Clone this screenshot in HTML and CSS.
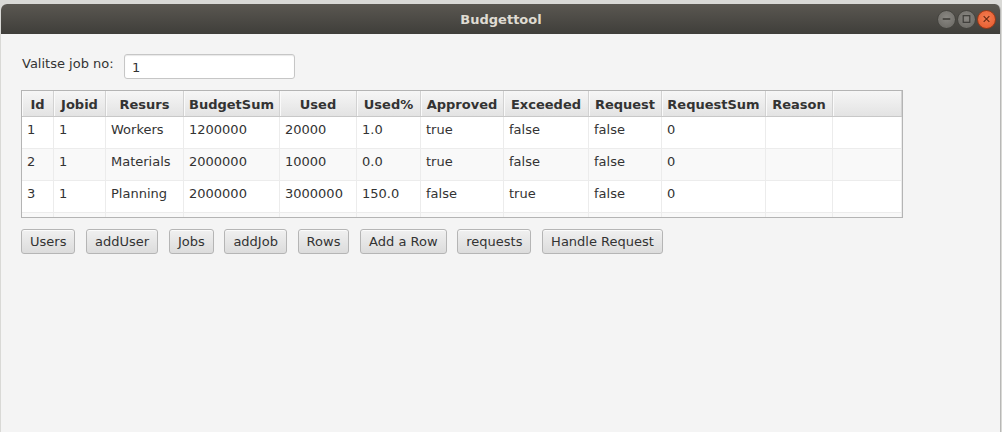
FILE: index.html
```html
<!DOCTYPE html>
<html>
<head>
<meta charset="utf-8">
<link rel="stylesheet" href="styles.css">
</head>
<body>
<div class="desktop">
  <div class="window">
    <div class="titlebar">
      <div></div>
      <div class="title">Budgettool</div>
      <div class="controls">
        <span class="wbtn wmin"><svg width="18" height="18" viewBox="0 0 18 18"><line x1="5" y1="9" x2="13" y2="9" stroke="#3a3935" stroke-width="1.4"/></svg></span>
        <span class="wbtn wmax"><svg width="18" height="18" viewBox="0 0 18 18"><rect x="5.5" y="5.5" width="7" height="7" fill="none" stroke="#3a3935" stroke-width="1.2"/></svg></span>
        <span class="wbtn wclose"><svg width="18" height="18" viewBox="0 0 18 18"><path d="M6 6 L12 12 M12 6 L6 12" stroke="#6b2a12" stroke-width="1.3"/></svg></span>
      </div>
    </div>
    <div class="content">
      <div class="jobrow">
        <span class="label">Valitse job no:</span>
        <div class="field">1</div>
      </div>
      <div class="table">
        <div class="thead">
          <div>Id</div><div>Jobid</div><div>Resurs</div><div>BudgetSum</div><div>Used</div><div>Used%</div><div>Approved</div><div>Exceeded</div><div>Request</div><div>RequestSum</div><div>Reason</div><div></div>
        </div>
        <div class="tbody">
          <div class="tr">
            <div>1</div><div>1</div><div>Workers</div><div>1200000</div><div>20000</div><div>1.0</div><div>true</div><div>false</div><div>false</div><div>0</div><div></div><div></div>
          </div>
          <div class="tr odd">
            <div>2</div><div>1</div><div>Materials</div><div>2000000</div><div>10000</div><div>0.0</div><div>true</div><div>false</div><div>false</div><div>0</div><div></div><div></div>
          </div>
          <div class="tr">
            <div>3</div><div>1</div><div>Planning</div><div>2000000</div><div>3000000</div><div>150.0</div><div>false</div><div>true</div><div>false</div><div>0</div><div></div><div></div>
          </div>
          <div class="tr odd">
            <div></div><div></div><div></div><div></div><div></div><div></div><div></div><div></div><div></div><div></div><div></div><div></div>
          </div>
        </div>
      </div>
      <div class="buttons">
        <button class="btn">Users</button>
        <button class="btn">addUser</button>
        <button class="btn">Jobs</button>
        <button class="btn">addJob</button>
        <button class="btn">Rows</button>
        <button class="btn">Add a Row</button>
        <button class="btn">requests</button>
        <button class="btn">Handle Request</button>
      </div>
    </div>
  </div>
</div>
</body>
</html>
```
FILE: styles.css
```css
html, body {
  margin: 0;
  padding: 0;
}
body {
  width: 1002px;
  height: 432px;
  overflow: hidden;
  background: #d9d9d6;
  font-family: "DejaVu Sans", sans-serif;
  font-size: 13px;
  color: #333333;
}
.desktop {
  padding: 4px 1px 0 1px;
  height: 428px;
}
.window {
  width: 1000px;
  height: 428px;
  border-radius: 6px 6px 0 0;
  overflow: hidden;
  background: #f4f4f4;
  border-right: 1px solid #b8b8b6;
  box-sizing: border-box;
  display: flex;
  flex-direction: column;
}
.titlebar {
  height: 30px;
  flex: none;
  background: linear-gradient(#5a5751, #3f3e3a);
  display: grid;
  grid-template-columns: 1fr auto 1fr;
  align-items: center;
}
.title {
  color: #dfdbd2;
  font-weight: bold;
  font-size: 13px;
  padding-left: 1px;
}
.controls {
  display: flex;
  justify-content: flex-end;
  gap: 1px;
  padding-right: 4px;
}
.wbtn {
  width: 19px;
  height: 19px;
  border-radius: 50%;
  display: flex;
  align-items: center;
  justify-content: center;
}
.wmin, .wmax {
  background: radial-gradient(circle at 50% 40%, #8a8883, #676560);
  border: 1px solid #45443f;
  box-sizing: border-box;
}
.wclose {
  background: radial-gradient(circle at 50% 40%, #f47e52, #e4572a);
  border: 1px solid #9b3a18;
  box-sizing: border-box;
}
.content {
  padding: 20px 0 0 20px;
}
.jobrow {
  display: flex;
  align-items: flex-start;
  height: 25px;
}
.label {
  padding: 2px 0 0 1px;
  width: 102px;
  line-height: 16px;
}
.field {
  width: 171px;
  height: 25px;
  box-sizing: border-box;
  border: 1px solid #c6c6c6;
  border-radius: 3px;
  background: #ffffff;
  padding: 5px 0 0 7px;
  line-height: 16px;
  box-shadow: inset 0 1px 1px #e8e8e8;
}
.table {
  margin-top: 11px;
  width: 882px;
  box-sizing: border-box;
  border: 1px solid #b4b4b4;
  background: #ffffff;
}
.thead, .tr {
  display: grid;
  grid-template-columns: 32px 52px 78px 96px 77px 64px 83px 85px 73px 104px 67px 1fr;
}
.thead {
  height: 26px;
  background: linear-gradient(#f6f6f6, #e3e3e3);
  border-bottom: 1px solid #c8c8c8;
  box-sizing: border-box;
}
.thead > div {
  font-weight: bold;
  text-align: center;
  line-height: 16px;
  padding-top: 6px;
  border-right: 1px solid #d2d2d2;
  box-shadow: inset 1px 0 0 #fafafa;
  white-space: nowrap;
}
.tbody {
  height: 100px;
  overflow: hidden;
}
.tr {
  height: 32px;
  box-sizing: border-box;
  border-bottom: 1px solid #ececec;
  background: #ffffff;
}
.tr.odd {
  background: #f9f9f9;
}
.tr > div {
  border-right: 1px solid #ececec;
  padding: 5px 0 0 5px;
  line-height: 16px;
  white-space: nowrap;
}
.buttons {
  margin-top: 11px;
  display: flex;
  gap: 10.7px;
}
.btn {
  height: 25px;
  box-sizing: border-box;
  padding: 0 8px;
  font-family: "DejaVu Sans", sans-serif;
  font-size: 13px;
  color: #333333;
  border: 1px solid #b5b5b5;
  border-radius: 3px;
  background: linear-gradient(#f0f0f0, #dcdcdc);
  box-shadow: inset 0 1px 0 #fbfbfb;
  line-height: 16px;
}
```
